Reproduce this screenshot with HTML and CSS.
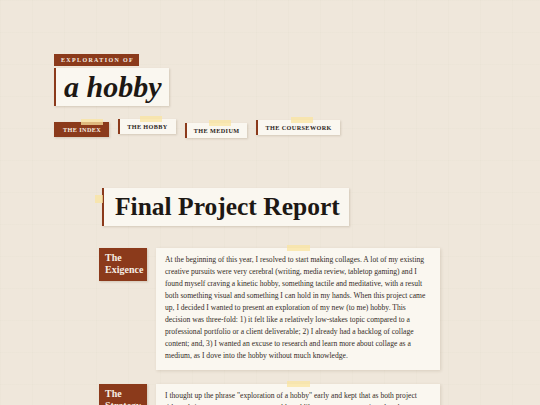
FILE: index.html
```html
<!DOCTYPE html>
<html lang="en">
<head>
  <meta charset="UTF-8">
  <meta name="viewport" content="width=device-width, initial-scale=1.0">
  <title>Exploration of a Hobby - Final Project Report</title>
  <link rel="stylesheet" href="styles.css">
</head>
<body>
  <header class="masthead">
    <div class="kicker">Exploration of</div>
    <h1 class="site-title">a hobby</h1>
    <nav class="tabs">
      <a class="tab tab-active" href="#"><span class="tape"></span>The Index</a>
      <a class="tab tab-hobby" href="#"><span class="tape"></span>The Hobby</a>
      <a class="tab tab-medium" href="#"><span class="tape"></span>The Medium</a>
      <a class="tab tab-coursework" href="#"><span class="tape"></span>The Coursework</a>
    </nav>
  </header>

  <main class="report">
    <h2 class="report-title"><span class="tape tape-side"></span>Final Project Report</h2>

    <section class="entry">
      <h3 class="entry-label">The Exigence</h3>
      <div class="entry-card">
        <span class="tape"></span>
        <p>At the beginning of this year, I resolved to start making collages. A lot of my existing creative pursuits were very cerebral (writing, media review, tabletop gaming) and I found myself craving a kinetic hobby, something tactile and meditative, with a result both something visual and something I can hold in my hands. When this project came up, I decided I wanted to present an exploration of my new (to me) hobby. This decision was three-fold: 1) it felt like a relatively low-stakes topic compared to a professional portfolio or a client deliverable; 2) I already had a backlog of collage content; and, 3) I wanted an excuse to research and learn more about collage as a medium, as I dove into the hobby without much knowledge.</p>
      </div>
    </section>

    <section class="entry">
      <h3 class="entry-label">The Strategy</h3>
      <div class="entry-card">
        <span class="tape"></span>
        <p>I thought up the phrase "exploration of a hobby" early and kept that as both project title and site name, so every page would read like one more scrap pinned to the same board. I kept the palette to paper, rust and masking tape, and let the layout stay loose and a little crooked.</p>
      </div>
    </section>
  </main>
</body>
</html>
```

FILE: styles.css
```css
body {
  margin: 0;
  font-family: "Liberation Serif", "Times New Roman", serif;
  color: #2b2420;
  background-color: #efe7db;
  background-image:
    linear-gradient(rgba(160, 130, 100, 0.025) 1px, transparent 1px),
    linear-gradient(90deg, rgba(160, 130, 100, 0.025) 1px, transparent 1px);
  background-size: 32px 32px;
}

/* ---- header ---- */

.masthead {
  padding: 54px 0 0 54px;
}

.kicker {
  display: table;
  background: #8b3a1b;
  color: #f6eee4;
  font-size: 6px;
  font-weight: bold;
  letter-spacing: 1.35px;
  text-transform: uppercase;
  line-height: 12px;
  padding: 0 5px 0 7px;
}

.site-title {
  display: table;
  margin: 2px 0 0;
  padding: 0 7px 0 8px;
  height: 36px;
  line-height: 38px;
  font-size: 30px;
  font-style: italic;
  font-weight: bold;
  color: #1d1814;
  background: #faf7f0;
  border-left: 2px solid #8b3a1b;
  box-shadow: 1px 1px 2px rgba(90, 60, 30, 0.18);
}

.tabs {
  display: flex;
  align-items: flex-start;
  gap: 9px;
  margin-top: 13px;
}

.tab {
  position: relative;
  display: block;
  padding: 0 8px 0 7px;
  line-height: 15px;
  font-size: 6.2px;
  font-weight: bold;
  letter-spacing: 0.4px;
  text-transform: uppercase;
  text-decoration: none;
  color: #2b2420;
  background: #faf7f0;
  border-left: 2px solid #8b3a1b;
  box-shadow: 1px 1px 2px rgba(90, 60, 30, 0.18);
}

.tab-active {
  margin-top: 3px;
  background: #8b3a1b;
  color: #f6eee4;
  border-left: none;
  padding: 0 8px 0 9px;
}

.tab-medium {
  margin-top: 4px;
}

.tab-coursework {
  margin-top: 1px;
}

/* strips of masking tape holding things down */
.tape {
  position: absolute;
  top: -3px;
  left: 50%;
  width: 22px;
  height: 6px;
  margin-left: -8px;
  background: rgba(250, 228, 160, 0.75);
}

.tab-active .tape {
  margin-left: -1px;
}

/* ---- report ---- */

.report {
  padding: 50px 0 0 99px;
}

.report-title {
  position: relative;
  display: table;
  margin: 0 0 0 3px;
  padding: 0 9px 0 11px;
  height: 36px;
  line-height: 38px;
  font-size: 25.5px;
  font-weight: bold;
  color: #1d1814;
  background: #faf7f0;
  border-left: 2px solid #8b3a1b;
  box-shadow: 1px 1px 2px rgba(90, 60, 30, 0.18);
}

.tape-side {
  top: 7px;
  left: -9px;
  width: 8px;
  height: 8px;
  margin-left: 0;
}

.entry {
  display: grid;
  grid-template-columns: 48px 284px;
  gap: 9px;
  align-items: start;
  margin-top: 22px;
}

.entry + .entry {
  margin-top: 14px;
}

.entry-label {
  margin: 0;
  padding: 4px 6px 5px;
  background: #8b3a1b;
  color: #f6eee4;
  font-size: 10px;
  font-weight: bold;
  line-height: 12px;
  box-shadow: 1px 1px 2px rgba(90, 60, 30, 0.2);
}

.entry-card {
  position: relative;
  background: #faf7f0;
  padding: 6px 10px 8px 9px;
  box-shadow: 1px 1px 3px rgba(90, 60, 30, 0.15);
}

.entry-card .tape {
  top: -3px;
  left: 131px;
  margin-left: 0;
  width: 23px;
}

.entry-card p {
  margin: 0;
  font-size: 7.6px;
  line-height: 12px;
  color: #342c27;
}
```
